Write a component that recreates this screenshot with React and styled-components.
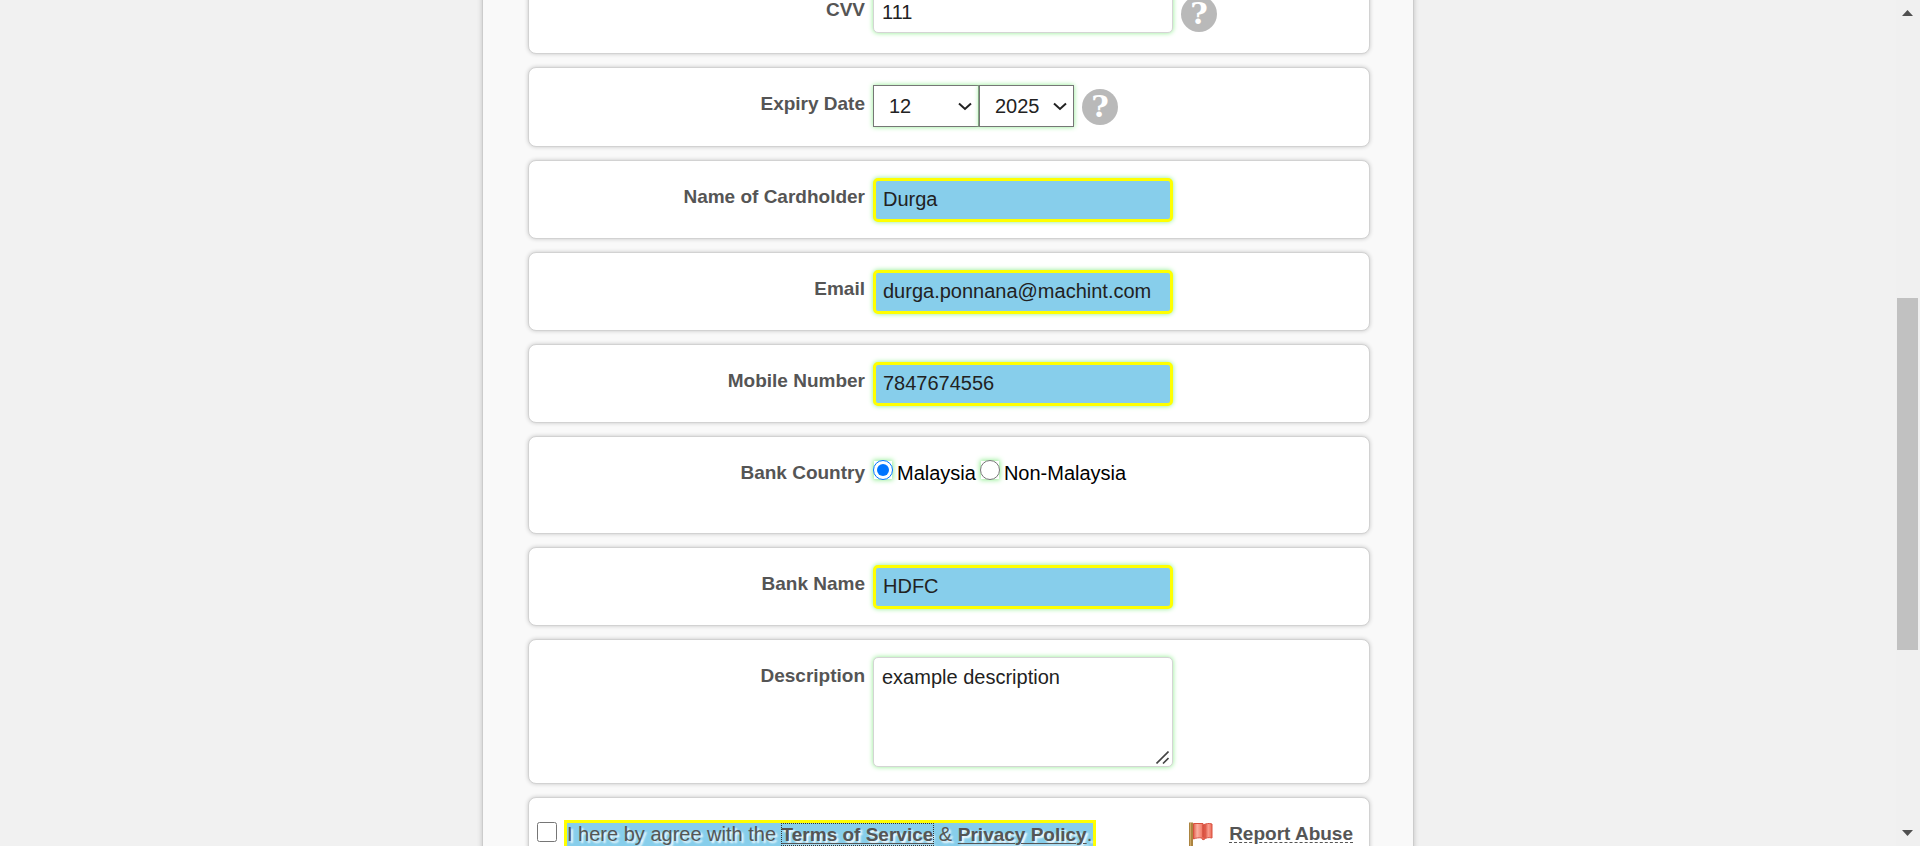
import React from "react";
import styled, { createGlobalStyle, css } from "styled-components";

const GlobalStyle = createGlobalStyle`
  * { box-sizing: border-box; }
  body {
    margin: 0;
    background: #f1f1f1;
    font-family: "Liberation Sans", Arial, sans-serif;
    font-size: 20px;
    line-height: 24px;
    color: #555;
  }
`;

const Page = styled.div`
  display: flex;
  height: 100vh;
  overflow: hidden;
`;

const Viewport = styled.main`
  flex: 1;
  min-width: 0;
  overflow: hidden;
`;

const Panel = styled.form`
  display: flex;
  flex-direction: column;
  gap: 13px;
  width: 100%;
  max-width: 932px;
  margin: -28px auto 0;
  padding: 1px 43px 60px 45px;
  background: #f9f9f9;
  border: solid #ccc;
  border-width: 0 1px;
  box-shadow: 0 0 5px rgba(0, 0, 0, 0.2);
`;

const Card = styled.section`
  padding: 17px 0 16px;
  background: #fff;
  border: 1px solid #d2d2d2;
  border-radius: 8px;
  box-shadow: 0 0 4px rgba(0, 0, 0, 0.2);
`;

const FieldRow = styled(Card)`
  display: flex;
  align-items: flex-start;
  gap: 8px;
  ${(p) => p.$tall && css`padding-bottom: 47px;`}
`;

const labelText = css`
  flex: 0 0 40%;
  padding: 7px 0 0;
  text-align: right;
  font-size: 19px;
  font-weight: bold;
`;

const FieldLabel = styled.label`
  ${labelText}
`;

const GroupLabel = styled.div`
  ${labelText}
`;

const fieldBox = css`
  font-family: inherit;
  font-size: 20px;
  line-height: 24px;
  color: #222;
  background: #fff;
  outline: none;
  margin: 0;
`;

const glow = css`
  box-shadow: 0 0 5px #90ee90;
`;

const TextInput = styled.input`
  ${fieldBox}
  ${glow}
  width: 300px;
  height: 42px;
  padding: 0 8px;
  border: 1px solid #d4d4d4;
  border-radius: 5px;
  ${(p) =>
    p.$marked &&
    css`
      height: 44px;
      padding: 0 7px 2px;
      border: 3px solid #ff0;
      background: #87ceeb;
    `}
`;

const AreaWrap = styled.div`
  position: relative;
  display: flex;
`;

const TextArea = styled.textarea`
  ${fieldBox}
  ${glow}
  width: 300px;
  height: 110px;
  padding: 7px 8px;
  border: 1px solid #d4d4d4;
  border-radius: 5px;
  resize: none;
`;

const Grip = styled.svg`
  position: absolute;
  right: 4px;
  bottom: 3px;
`;

const Selects = styled.div`
  display: flex;
`;

const SelectWrap = styled.div`
  position: relative;
  width: ${(p) => p.$width};
`;

const Select = styled.select`
  ${fieldBox}
  ${glow}
  appearance: none;
  display: block;
  width: 100%;
  height: 42px;
  padding: 0 24px 0 15px;
  border: 1px solid #767676;
  border-radius: 0;
`;

const Chevron = styled.svg`
  position: absolute;
  right: 7px;
  top: 17px;
  pointer-events: none;
`;

const HelpButton = styled.button`
  width: 36px;
  height: 36px;
  margin: ${(p) => p.$top} 0 5px;
  padding: 0;
  border: 0;
  border-radius: 50%;
  background: #b9b9b9;
  color: #fff;
  font-family: "DejaVu Serif", serif;
  font-weight: bold;
  font-size: 30px;
  line-height: 36px;
`;

const RadioGroup = styled.div`
  display: flex;
  gap: 4px;
  padding-top: 6px;
  line-height: 26px;
  color: #000;
`;

const Choice = styled.label`
  display: flex;
  align-items: flex-start;
  gap: 4px;
`;

const Radio = styled.input`
  ${glow}
  width: 20px;
  height: 20px;
  margin: 0;
  background: #fff;
  accent-color: #0075ff;
`;

const Footer = styled(Card)`
  display: flex;
  align-items: flex-start;
  padding: 22px 16px 40px 8px;
`;

const CheckBox = styled.input`
  width: 20px;
  height: 20px;
  margin: 2px 7px 0 0;
`;

const Agreement = styled.label`
  padding: 0 1px 0 0;
  border: 3px solid #ff0;
  background: #87ceeb;
  line-height: 22px;
  text-shadow: 2px 2px 2px #fff;
  white-space: nowrap;
`;

const Link = styled.a`
  color: #555;
  font-size: 19px;
  font-weight: bold;
  text-decoration: underline 1px;
  text-underline-offset: 2px;
  ${(p) => p.$focused && css`outline: 1px dotted #333;`}
`;

const Report = styled.div`
  display: flex;
  align-items: flex-start;
  gap: 16px;
  margin-left: auto;
  padding-top: 2px;
`;

const ReportLink = styled(Link)`
  text-decoration: underline dashed 1px;
  text-shadow: 2px 2px 2px #fff;
`;

const ScrollBar = styled.div`
  display: flex;
  flex-direction: column;
  flex: 0 0 24px;
  padding: 0 2px 0 1px;
  background: #f0f0f0;
`;

const ScrollArrow = styled.svg`
  display: block;
  flex: none;
`;

const Space = styled.div`
  flex: ${(p) => p.$share} 0 0;
`;

const Thumb = styled.div`
  flex: 352 0 0;
  background: #c1c1c1;
`;

const Help = ({ top, label }) => (
  <HelpButton type="button" aria-label={label} $top={top}>?</HelpButton>
);

const DropDown = ({ width, label, id, value, options }) => (
  <SelectWrap $width={width}>
    <Select id={id} aria-label={label} defaultValue={value}>
      {options.map((o) => <option key={o}>{o}</option>)}
    </Select>
    <Chevron width="14" height="10" viewBox="0 0 14 10" fill="none" stroke="#222" strokeWidth="2">
      <path d="M1 1.500 7 7l6-5.500" />
    </Chevron>
  </SelectWrap>
);

const MarkedField = ({ id, label, value, type = "text" }) => (
  <FieldRow>
    <FieldLabel htmlFor={id}>{label}</FieldLabel>
    <TextInput $marked id={id} type={type} defaultValue={value} spellCheck={false} />
  </FieldRow>
);

const Flag = () => (
  <svg width="24" height="26" viewBox="0 0 24 26" aria-hidden="true">
    <defs>
      <linearGradient id="flagRed" x1="0" x2="1" y1="0" y2="0">
        <stop offset="0" stopColor="#e2604c" />
        <stop offset="0.2" stopColor="#fbb0a2" />
        <stop offset="0.5" stopColor="#f07460" />
        <stop offset="0.62" stopColor="#d94f3f" />
        <stop offset="0.8" stopColor="#f99c8c" />
        <stop offset="1" stopColor="#ec6a58" />
      </linearGradient>
    </defs>
    <path d="M0 0.500h4V26H0z" fill="#ac8440" />
    <path d="M1.500 1v25" stroke="#d0aa68" strokeWidth="1" />
    <path d="M4.500 1.500h9.500v1.500c3-1.500 6-2 9-1V16c-3-.8-6-.5-8 1.500-1.500.5-2 0-2-1.500-3-.6-6 0-8.500 1z" fill="url(#flagRed)" stroke="#d9503f" strokeWidth="1" />
    <path d="M14 3v12.500" stroke="#c53c2e" strokeWidth="1" />
  </svg>
);

export default function App() {
  return (
    <Page>
      <GlobalStyle />
      <Viewport>
        <Panel onSubmit={(e) => e.preventDefault()}>
          <FieldRow>
            <FieldLabel htmlFor="cvv">CVV</FieldLabel>
            <TextInput id="cvv" type="text" defaultValue="111" />
            <Help top="5px" label="About the CVV" />
          </FieldRow>
          <FieldRow>
            <FieldLabel htmlFor="month">Expiry Date</FieldLabel>
            <Selects>
              <DropDown id="month" width="106px" value="12" options={["10", "11", "12"]} />
              <DropDown label="Expiry year" width="95px" value="2025" options={["2024", "2025", "2026"]} />
            </Selects>
            <Help top="4px" label="About the expiry date" />
          </FieldRow>
          <MarkedField id="holder" label="Name of Cardholder" value="Durga" />
          <MarkedField id="email" label="Email" type="email" value="durga.ponnana@machint.com" />
          <MarkedField id="mobile" label="Mobile Number" type="tel" value="7847674556" />
          <FieldRow $tall>
            <GroupLabel id="country">Bank Country</GroupLabel>
            <RadioGroup role="radiogroup" aria-labelledby="country">
              <Choice><Radio type="radio" name="country" defaultChecked />Malaysia</Choice>
              <Choice><Radio type="radio" name="country" />Non-Malaysia</Choice>
            </RadioGroup>
          </FieldRow>
          <MarkedField id="bank" label="Bank Name" value="HDFC" />
          <FieldRow>
            <FieldLabel htmlFor="description">Description</FieldLabel>
            <AreaWrap>
              <TextArea id="description" defaultValue="example description" spellCheck={false} />
              <Grip width="13" height="13" viewBox="0 0 13 13" stroke="#444" strokeWidth="1.600" aria-hidden="true">
                <path d="M.5 12.500 12.500.5M7 12.500 12.500 7" />
              </Grip>
            </AreaWrap>
          </FieldRow>
          <Footer>
            <CheckBox id="agree" type="checkbox" />
            <Agreement htmlFor="agree">
              I here by agree with the <Link href="#terms" $focused>Terms of Service</Link> &amp;{" "}
              <Link href="#privacy">Privacy Policy</Link>.
            </Agreement>
            <Report>
              <Flag />
              <ReportLink href="#report">Report Abuse</ReportLink>
            </Report>
          </Footer>
        </Panel>
      </Viewport>
      <ScrollBar aria-hidden="true">
        <ScrollArrow width="21" height="21" viewBox="0 0 21 21" fill="#505050">
          <path d="M5 16h11l-5.500-6z" />
        </ScrollArrow>
        <Space $share={277} />
        <Thumb />
        <Space $share={175} />
        <ScrollArrow width="21" height="21" viewBox="0 0 21 21" fill="#505050">
          <path d="M5 5h11l-5.500 6z" />
        </ScrollArrow>
      </ScrollBar>
    </Page>
  );
}
